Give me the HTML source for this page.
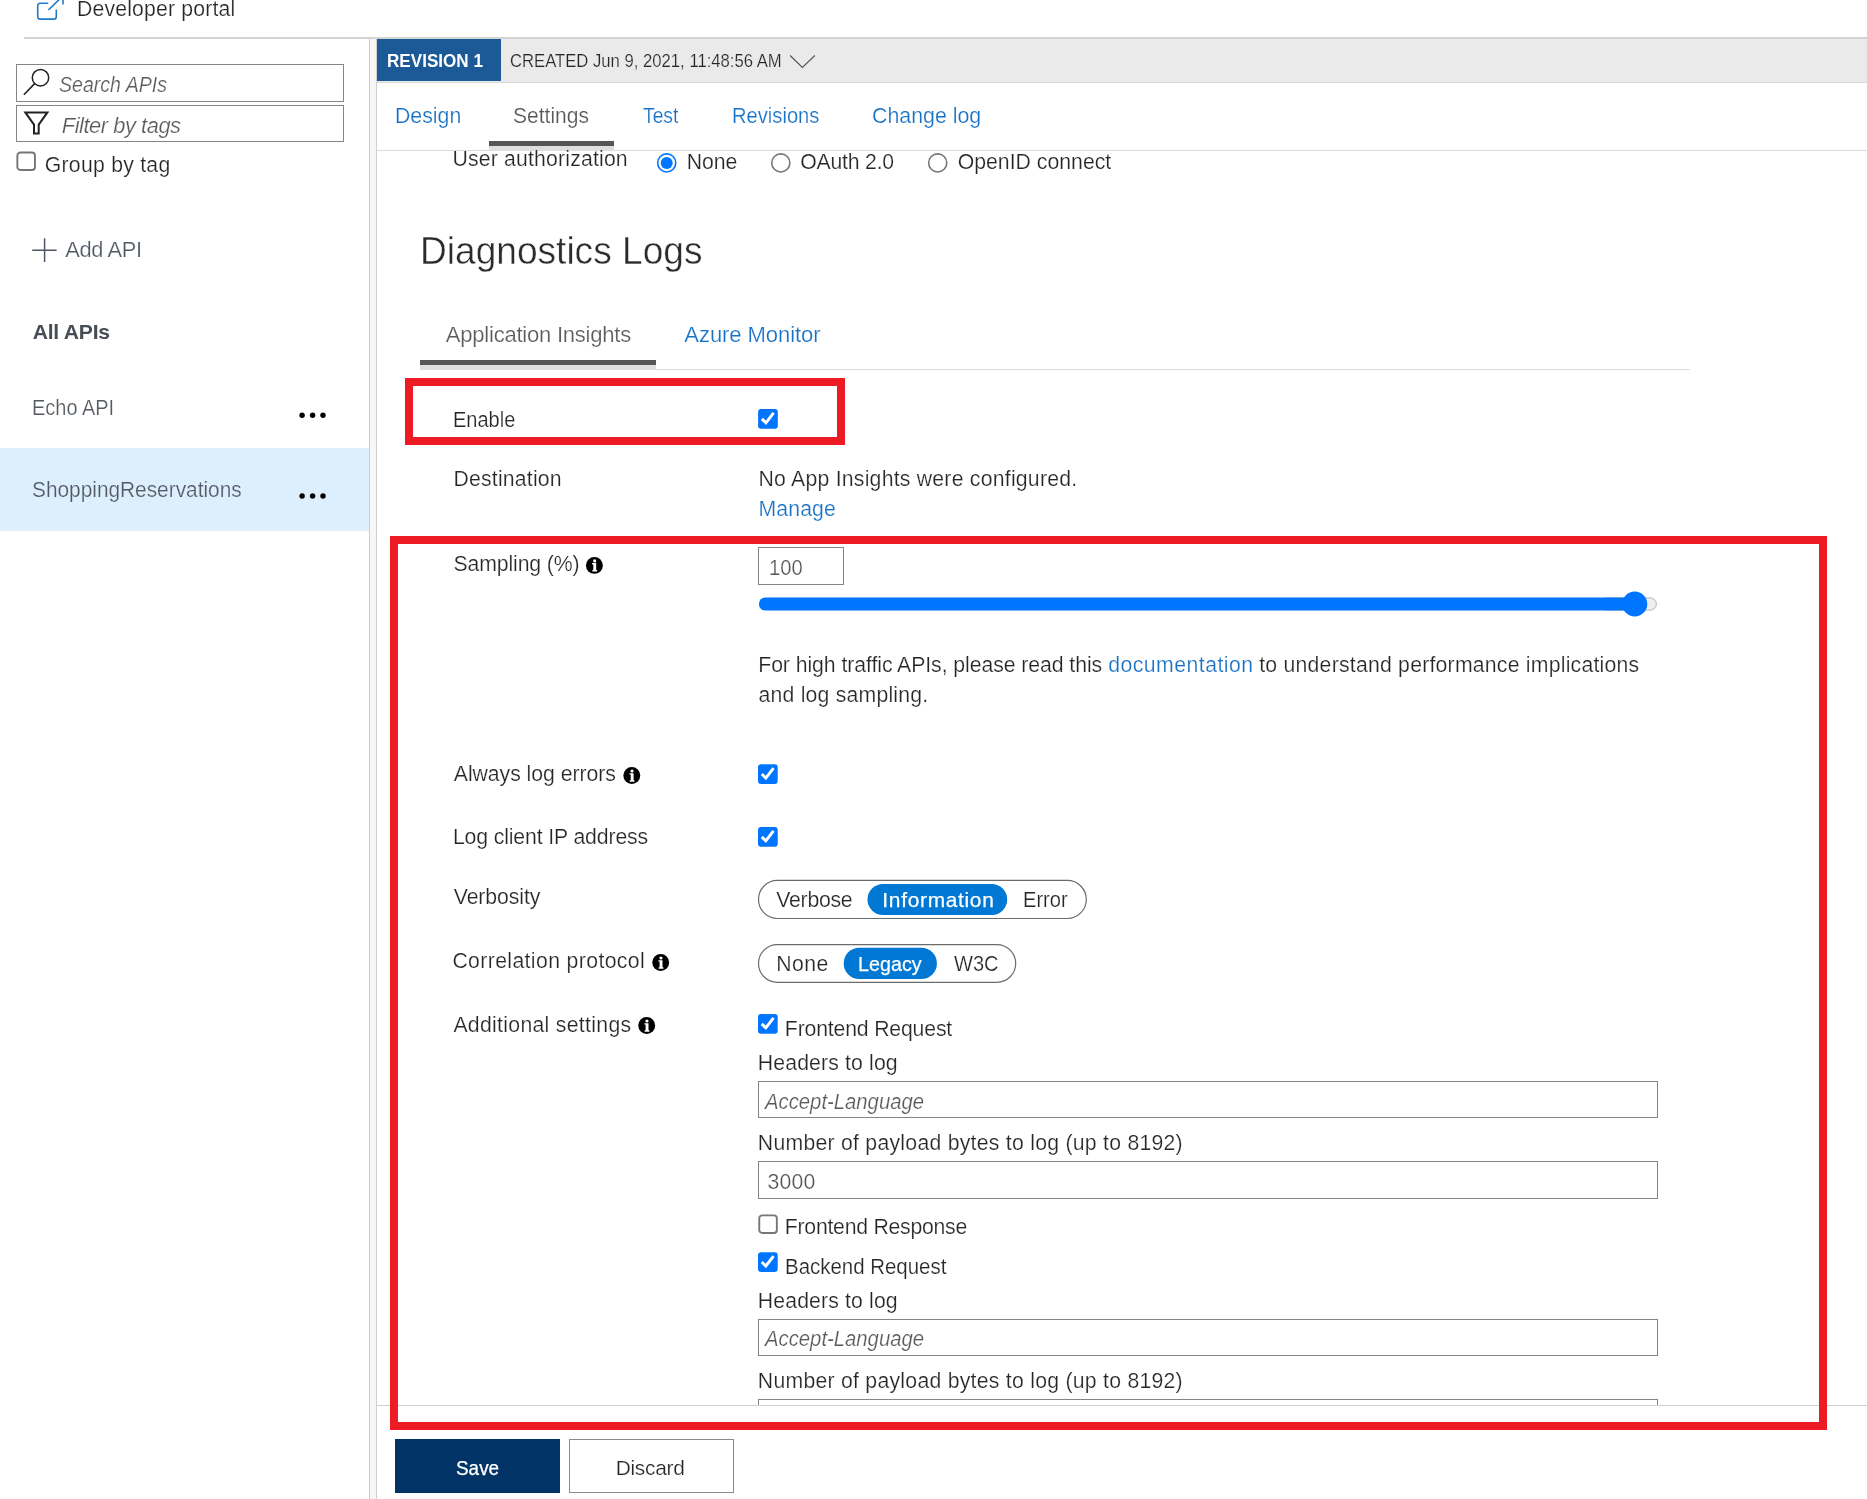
<!DOCTYPE html>
<html lang="en"><head><meta charset="utf-8"><title>API Management - Diagnostics Logs</title>
<style>
html,body{margin:0;padding:0;background:#fff;}
body{width:1867px;height:1499px;position:relative;overflow:hidden;font-family:"Liberation Sans", Arial, sans-serif;}
.t{position:absolute;white-space:pre;display:block;}
.b{position:absolute;display:block;overflow:visible;}
</style></head><body>
<div class="b" style="left:24.00px;top:37.30px;width:1843.00px;height:1.60px;background:#d4d4d4;"></div>
<svg class="b" style="left:30px;top:0px" width="40" height="24" viewBox="30 0 40 24"><path d="M48.2 3.2 H40.4 Q37.7 3.2 37.7 5.9 V16.4 Q37.7 19.1 40.4 19.1 H53.6 Q56.3 19.1 56.3 16.4 V9.4" fill="none" stroke="#2079cc" stroke-width="1.6"/><path d="M48.4 10 L63 -4.2 M63 4.4 V-5" fill="none" stroke="#2079cc" stroke-width="1.6"/></svg>
<div class="b" style="left:16.00px;top:64.00px;width:328.20px;height:37.70px;border:1px solid #858585;box-sizing:border-box;"></div>
<div class="b" style="left:16.00px;top:105.20px;width:328.20px;height:36.60px;border:1px solid #858585;box-sizing:border-box;"></div>
<svg class="b" style="left:20px;top:66px" width="34" height="32" viewBox="20 66 34 32"><circle cx="40.5" cy="77.7" r="8.2" fill="none" stroke="#222" stroke-width="1.5"/><path d="M34.6 83.6 L23.9 94.7" stroke="#222" stroke-width="1.6" fill="none"/></svg>
<svg class="b" style="left:20px;top:108px" width="34" height="30" viewBox="20 108 34 30"><path d="M25.3 112.4 H47.4 L38.7 124.6 V133.4 H34 V124.6 Z" fill="none" stroke="#222" stroke-width="2" stroke-linejoin="miter"/></svg>
<svg class="b" style="left:15px;top:150px" width="22" height="22" viewBox="-1.40 -1.50 22 22"><rect x="0.95" y="0.95" width="17.6" height="17.6" rx="3" fill="#fff" stroke="#767676" stroke-width="1.9"/></svg>
<svg class="b" style="left:30px;top:236px" width="30" height="28" viewBox="30 236 30 28"><path d="M32.2 250.3 H56.6 M44.6 238.2 V261.9" stroke="#4d5563" stroke-width="1.5" fill="none"/></svg>
<svg class="b" style="left:296px;top:410px" width="33" height="11" viewBox="-1.70 -1.30 33 11"><circle cx="4.4" cy="4" r="2.7"/><circle cx="14.9" cy="4" r="2.7"/><circle cx="25.3" cy="4" r="2.7"/></svg>
<div class="b" style="left:0.00px;top:448.00px;width:369.00px;height:82.50px;background:#ddeefd;"></div>
<svg class="b" style="left:296px;top:491px" width="33" height="10" viewBox="-1.70 -1.00 33 10"><circle cx="4.4" cy="4" r="2.7"/><circle cx="14.9" cy="4" r="2.7"/><circle cx="25.3" cy="4" r="2.7"/></svg>
<div class="b" style="left:369.00px;top:39.00px;width:8.00px;height:1460.00px;background:#f7f7f7;border-left:1px solid #cccccc;border-right:1px solid #d0d0d0;box-sizing:border-box;"></div>
<div class="b" style="left:377.00px;top:38.90px;width:1490.00px;height:43.70px;background:#eaeaea;border-bottom:1px solid #d9d9d9;box-sizing:border-box;"></div>
<div class="b" style="left:377.00px;top:39.20px;width:123.80px;height:41.60px;background:#1b5a96;"></div>
<svg class="b" style="left:786px;top:50px" width="34" height="24" viewBox="786 50 34 24"><path d="M790.1 55.5 L802.4 67.5 L814.8 55.5" fill="none" stroke="#555" stroke-width="1.15"/></svg>
<div class="b" style="left:377.00px;top:149.80px;width:1490.00px;height:1.20px;background:#dcdcdc;"></div>
<div class="b" style="left:489.00px;top:146.00px;width:124.80px;height:4.60px;background:#dedede;"></div>
<div class="b" style="left:489.00px;top:141.00px;width:124.80px;height:5.20px;background:#555;"></div>
<svg class="b" style="left:655px;top:151px" width="23" height="23" viewBox="-1.70 -1.90 23 23"><circle cx="10" cy="10" r="9.05" fill="#fff" stroke="#0075ff" stroke-width="1.6"/><circle cx="10" cy="10" r="6" fill="#0075ff"/></svg>
<svg class="b" style="left:769px;top:151px" width="23" height="23" viewBox="-1.80 -1.90 23 23"><circle cx="10" cy="10" r="9.05" fill="#fff" stroke="#767676" stroke-width="1.6"/></svg>
<svg class="b" style="left:926px;top:151px" width="23" height="23" viewBox="-1.70 -1.90 23 23"><circle cx="10" cy="10" r="9.05" fill="#fff" stroke="#767676" stroke-width="1.6"/></svg>
<div class="b" style="left:656.00px;top:369.00px;width:1034.00px;height:1.20px;background:#dcdcdc;"></div>
<div class="b" style="left:420.00px;top:365.00px;width:235.80px;height:4.90px;background:#dedede;"></div>
<div class="b" style="left:420.00px;top:359.90px;width:235.80px;height:5.20px;background:#555;"></div>
<svg class="b" style="left:757px;top:408px" width="22" height="22" viewBox="-1.10 -1.10 22 22"><g transform="scale(0.9850)"><rect x="0" y="0" width="20" height="20" rx="3" fill="#0075ff"/><path d="M3.85 9.9 L7.95 14 L15.75 3.9" fill="none" stroke="#fff" stroke-width="3" stroke-linejoin="miter"/></g></svg>
<svg class="b" style="left:584px;top:555px" width="21" height="21" viewBox="-1.40 -1.40 21 21"><circle cx="9" cy="9" r="8.45" fill="#000"/><circle cx="9.25" cy="4.5" r="1.6" fill="#fff"/><path d="M6.7 6.7 H10.8 V13.7 H11.7 V15.2 H6.95 V13.7 H7.9 V8.1 H6.7 Z" fill="#fff"/></svg>
<div class="b" style="left:757.90px;top:547.30px;width:86.30px;height:37.50px;border:1px solid #858585;box-sizing:border-box;"></div>
<svg class="b" style="left:757px;top:589px" width="902" height="30" viewBox="-1.00 -1.00 902 30"><rect x="842" y="7.9" width="56.4" height="12.2" rx="6.1" fill="#efefef" stroke="#b4b4b4" stroke-width="1"/><rect x="0.9" y="7.4" width="880" height="13.2" rx="6.6" fill="#0075ff"/><circle cx="876.7" cy="14" r="12.55" fill="#0075ff"/></svg>
<svg class="b" style="left:621px;top:765px" width="21" height="21" viewBox="-1.80 -1.50 21 21"><circle cx="9" cy="9" r="8.45" fill="#000"/><circle cx="9.25" cy="4.5" r="1.6" fill="#fff"/><path d="M6.7 6.7 H10.8 V13.7 H11.7 V15.2 H6.95 V13.7 H7.9 V8.1 H6.7 Z" fill="#fff"/></svg>
<svg class="b" style="left:757px;top:763px" width="22" height="22" viewBox="-1.00 -1.30 22 22"><g transform="scale(0.9850)"><rect x="0" y="0" width="20" height="20" rx="3" fill="#0075ff"/><path d="M3.85 9.9 L7.95 14 L15.75 3.9" fill="none" stroke="#fff" stroke-width="3" stroke-linejoin="miter"/></g></svg>
<svg class="b" style="left:757px;top:826px" width="22" height="22" viewBox="-1.00 -1.10 22 22"><g transform="scale(0.9850)"><rect x="0" y="0" width="20" height="20" rx="3" fill="#0075ff"/><path d="M3.85 9.9 L7.95 14 L15.75 3.9" fill="none" stroke="#fff" stroke-width="3" stroke-linejoin="miter"/></g></svg>
<svg class="b" style="left:756px;top:878px" width="332" height="43" viewBox="-1.90 -1.80 332 43"><rect x="0.6" y="0.6" width="327.8" height="38.1" rx="19.05" fill="#fff" stroke="#6b6b6b" stroke-width="1.2"/><rect x="109.6" y="4.2" width="139.7" height="31" rx="15.5" fill="#0078d4"/></svg>
<svg class="b" style="left:650px;top:952px" width="21" height="21" viewBox="-1.70 -1.50 21 21"><circle cx="9" cy="9" r="8.45" fill="#000"/><circle cx="9.25" cy="4.5" r="1.6" fill="#fff"/><path d="M6.7 6.7 H10.8 V13.7 H11.7 V15.2 H6.95 V13.7 H7.9 V8.1 H6.7 Z" fill="#fff"/></svg>
<svg class="b" style="left:756px;top:943px" width="262" height="41" viewBox="-1.90 -1.00 262 41"><rect x="0.6" y="0.6" width="257.2" height="37.7" rx="18.85" fill="#fff" stroke="#6b6b6b" stroke-width="1.2"/><rect x="85.8" y="3.8" width="93.2" height="31.3" rx="15.6" fill="#0078d4"/></svg>
<svg class="b" style="left:636px;top:1015px" width="21" height="21" viewBox="-1.70 -1.50 21 21"><circle cx="9" cy="9" r="8.45" fill="#000"/><circle cx="9.25" cy="4.5" r="1.6" fill="#fff"/><path d="M6.7 6.7 H10.8 V13.7 H11.7 V15.2 H6.95 V13.7 H7.9 V8.1 H6.7 Z" fill="#fff"/></svg>
<svg class="b" style="left:757px;top:1013px" width="22" height="22" viewBox="-1.00 -1.10 22 22"><g transform="scale(0.9850)"><rect x="0" y="0" width="20" height="20" rx="3" fill="#0075ff"/><path d="M3.85 9.9 L7.95 14 L15.75 3.9" fill="none" stroke="#fff" stroke-width="3" stroke-linejoin="miter"/></g></svg>
<div class="b" style="left:758.00px;top:1081.30px;width:899.90px;height:36.50px;border:1px solid #858585;box-sizing:border-box;"></div>
<div class="b" style="left:758.00px;top:1161.20px;width:899.90px;height:37.50px;border:1px solid #858585;box-sizing:border-box;"></div>
<svg class="b" style="left:757px;top:1213px" width="22" height="22" viewBox="-1.30 -1.40 22 22"><rect x="0.95" y="0.95" width="17.6" height="17.6" rx="3" fill="#fff" stroke="#767676" stroke-width="1.9"/></svg>
<svg class="b" style="left:757px;top:1251px" width="22" height="22" viewBox="-1.00 -1.20 22 22"><g transform="scale(0.9850)"><rect x="0" y="0" width="20" height="20" rx="3" fill="#0075ff"/><path d="M3.85 9.9 L7.95 14 L15.75 3.9" fill="none" stroke="#fff" stroke-width="3" stroke-linejoin="miter"/></g></svg>
<div class="b" style="left:758.00px;top:1319.00px;width:899.90px;height:37.00px;border:1px solid #858585;box-sizing:border-box;"></div>
<div class="b" style="left:758.00px;top:1399.20px;width:899.90px;height:5.80px;border:1px solid #858585;border-bottom:none;box-sizing:border-box;"></div>
<div class="b" style="left:377.00px;top:1404.60px;width:1490.00px;height:94.40px;background:#fff;"></div>
<div class="b" style="left:377.00px;top:1404.60px;width:1490.00px;height:1.20px;background:#cfcfcf;"></div>
<div class="b" style="left:394.90px;top:1438.70px;width:165.10px;height:54.10px;background:#013366;"></div>
<div class="b" style="left:569.00px;top:1438.70px;width:165.20px;height:54.10px;border:1px solid #8a8a8a;box-sizing:border-box;background:#fff;"></div>
<div class="b" style="left:0;top:0;width:1867px;height:1499px;will-change:transform;">
<span class="t" id="t0" style="left:77.00px;top:-2.46px;font-size:21.22px;line-height:21.22px;color:#262626;letter-spacing:0.169px;-webkit-text-stroke:0.22px #fff;">Developer portal</span>
<span class="t" id="t1" style="left:58.70px;top:73.61px;font-size:21.84px;line-height:21.84px;color:#5a5a5a;letter-spacing:0.000px;font-style:italic;-webkit-text-stroke:0.22px #fff;transform:scaleX(0.8955);transform-origin:0 50%;">Search APIs</span>
<span class="t" id="t2" style="left:61.76px;top:115.01px;font-size:21.84px;line-height:21.84px;color:#5a5a5a;letter-spacing:-0.438px;font-style:italic;-webkit-text-stroke:0.22px #fff;">Filter by tags</span>
<span class="t" id="t3" style="left:44.78px;top:153.54px;font-size:21.22px;line-height:21.22px;color:#262626;letter-spacing:0.252px;-webkit-text-stroke:0.22px #fff;">Group by tag</span>
<span class="t" id="t4" style="left:65.28px;top:238.71px;font-size:21.84px;line-height:21.84px;color:#505963;letter-spacing:-0.363px;-webkit-text-stroke:0.22px #fff;">Add API</span>
<span class="t" id="t5" style="left:32.70px;top:321.43px;font-size:21.11px;line-height:21.11px;color:#474c55;letter-spacing:-0.228px;font-weight:bold;-webkit-text-stroke:0px #fff;">All APIs</span>
<span class="t" id="t6" style="left:32.18px;top:396.71px;font-size:21.84px;line-height:21.84px;color:#555a60;letter-spacing:0.000px;-webkit-text-stroke:0.22px #fff;transform:scaleX(0.9143);transform-origin:0 50%;">Echo API</span>
<span class="t" id="t7" style="left:31.60px;top:478.71px;font-size:21.84px;line-height:21.84px;color:#535a64;letter-spacing:0.000px;-webkit-text-stroke:0.22px #ddeefd;transform:scaleX(0.9546);transform-origin:0 50%;">ShoppingReservations</span>
<span class="t" id="t8" style="left:386.80px;top:52.15px;font-size:18.72px;line-height:18.72px;color:#fff;letter-spacing:0.000px;font-weight:bold;-webkit-text-stroke:0px #fff;transform:scaleX(0.9135);transform-origin:0 50%;">REVISION 1</span>
<span class="t" id="t9" style="left:509.66px;top:52.24px;font-size:18.62px;line-height:18.62px;color:#262626;letter-spacing:0.000px;-webkit-text-stroke:0.22px #eaeaea;transform:scaleX(0.8955);transform-origin:0 50%;">CREATED Jun 9, 2021, 11:48:56 AM</span>
<span class="t" id="t10" style="left:395.16px;top:105.47px;font-size:22.36px;line-height:22.36px;color:#1771c6;letter-spacing:0.000px;-webkit-text-stroke:0.22px #fff;transform:scaleX(0.9520);transform-origin:0 50%;">Design</span>
<span class="t" id="t11" style="left:512.90px;top:105.47px;font-size:22.36px;line-height:22.36px;color:#555;letter-spacing:0.000px;-webkit-text-stroke:0.22px #fff;transform:scaleX(0.9402);transform-origin:0 50%;">Settings</span>
<span class="t" id="t12" style="left:643.16px;top:105.47px;font-size:22.36px;line-height:22.36px;color:#1771c6;letter-spacing:0.000px;-webkit-text-stroke:0.22px #fff;transform:scaleX(0.8623);transform-origin:0 50%;">Test</span>
<span class="t" id="t13" style="left:731.70px;top:105.47px;font-size:22.36px;line-height:22.36px;color:#1771c6;letter-spacing:0.000px;-webkit-text-stroke:0.22px #fff;transform:scaleX(0.9016);transform-origin:0 50%;">Revisions</span>
<span class="t" id="t14" style="left:871.96px;top:105.47px;font-size:22.36px;line-height:22.36px;color:#1771c6;letter-spacing:0.000px;-webkit-text-stroke:0.22px #fff;transform:scaleX(0.9549);transform-origin:0 50%;">Change log</span>
<span class="t" id="t15" style="left:452.56px;top:148.04px;font-size:21.22px;line-height:21.22px;color:#262626;letter-spacing:0.172px;-webkit-text-stroke:0.22px #fff;">User authorization</span>
<span class="t" id="t16" style="left:686.72px;top:151.34px;font-size:21.22px;line-height:21.22px;color:#262626;letter-spacing:-0.068px;-webkit-text-stroke:0.22px #fff;">None</span>
<span class="t" id="t17" style="left:800.16px;top:151.34px;font-size:21.22px;line-height:21.22px;color:#262626;letter-spacing:-0.191px;-webkit-text-stroke:0.22px #fff;">OAuth 2.0</span>
<span class="t" id="t18" style="left:957.70px;top:151.34px;font-size:21.22px;line-height:21.22px;color:#262626;letter-spacing:0.017px;-webkit-text-stroke:0.22px #fff;">OpenID connect</span>
<span class="t" id="t19" style="left:419.86px;top:230.73px;font-size:39.30px;line-height:39.30px;color:#2b2b2b;letter-spacing:0.000px;-webkit-text-stroke:0.45px #fff;transform:scaleX(0.9438);transform-origin:0 50%;">Diagnostics Logs</span>
<span class="t" id="t20" style="left:445.82px;top:323.73px;font-size:22.05px;line-height:22.05px;color:#5a5a5a;letter-spacing:-0.241px;-webkit-text-stroke:0.22px #fff;">Application Insights</span>
<span class="t" id="t21" style="left:684.34px;top:323.73px;font-size:22.05px;line-height:22.05px;color:#1771c6;letter-spacing:-0.079px;-webkit-text-stroke:0.22px #fff;">Azure Monitor</span>
<span class="t" id="t22" style="left:452.92px;top:409.04px;font-size:21.22px;line-height:21.22px;color:#262626;letter-spacing:0.000px;-webkit-text-stroke:0.22px #fff;transform:scaleX(0.9435);transform-origin:0 50%;">Enable</span>
<span class="t" id="t23" style="left:453.52px;top:468.14px;font-size:21.22px;line-height:21.22px;color:#262626;letter-spacing:0.199px;-webkit-text-stroke:0.22px #fff;">Destination</span>
<span class="t" id="t24" style="left:758.52px;top:468.34px;font-size:21.22px;line-height:21.22px;color:#262626;letter-spacing:0.234px;-webkit-text-stroke:0.22px #fff;">No App Insights were configured.</span>
<span class="t" id="t25" style="left:758.52px;top:498.34px;font-size:21.22px;line-height:21.22px;color:#1771c6;letter-spacing:0.128px;-webkit-text-stroke:0.22px #fff;">Manage</span>
<span class="t" id="t26" style="left:453.54px;top:552.94px;font-size:21.22px;line-height:21.22px;color:#262626;letter-spacing:-0.122px;-webkit-text-stroke:0.22px #fff;">Sampling (%)</span>
<span class="t" id="t27" style="left:769.10px;top:557.04px;font-size:21.22px;line-height:21.22px;color:#555;letter-spacing:0.000px;-webkit-text-stroke:0.22px #fff;transform:scaleX(0.9516);transform-origin:0 50%;">100</span>
<span class="t" id="t28" style="left:758.24px;top:654.24px;font-size:21.22px;line-height:21.22px;color:#262626;letter-spacing:-0.064px;-webkit-text-stroke:0.22px #fff;">For high traffic APIs, please read this</span>
<span class="t" id="t29" style="left:1108.26px;top:654.24px;font-size:21.22px;line-height:21.22px;color:#1771c6;letter-spacing:0.464px;-webkit-text-stroke:0.22px #fff;">documentation</span>
<span class="t" id="t30" style="left:1259.26px;top:654.24px;font-size:21.22px;line-height:21.22px;color:#262626;letter-spacing:0.228px;-webkit-text-stroke:0.22px #fff;">to understand performance implications</span>
<span class="t" id="t31" style="left:758.54px;top:684.14px;font-size:21.22px;line-height:21.22px;color:#262626;letter-spacing:0.209px;-webkit-text-stroke:0.22px #fff;">and log sampling.</span>
<span class="t" id="t32" style="left:453.78px;top:763.14px;font-size:21.22px;line-height:21.22px;color:#262626;letter-spacing:-0.037px;-webkit-text-stroke:0.22px #fff;">Always log errors</span>
<span class="t" id="t33" style="left:452.90px;top:826.34px;font-size:21.22px;line-height:21.22px;color:#262626;letter-spacing:-0.126px;-webkit-text-stroke:0.22px #fff;">Log client IP address</span>
<span class="t" id="t34" style="left:453.78px;top:886.34px;font-size:21.22px;line-height:21.22px;color:#262626;letter-spacing:-0.093px;-webkit-text-stroke:0.22px #fff;">Verbosity</span>
<span class="t" id="t35" style="left:776.34px;top:889.04px;font-size:21.22px;line-height:21.22px;color:#262626;letter-spacing:-0.267px;-webkit-text-stroke:0.22px #fff;">Verbose</span>
<span class="t" id="t36" style="left:882.36px;top:890.31px;font-size:20.90px;line-height:20.90px;color:#fff;letter-spacing:0.694px;-webkit-text-stroke:0.25px #fff;">Information</span>
<span class="t" id="t37" style="left:1023.30px;top:889.04px;font-size:21.22px;line-height:21.22px;color:#262626;letter-spacing:0.000px;-webkit-text-stroke:0.22px #fff;transform:scaleX(0.9469);transform-origin:0 50%;">Error</span>
<span class="t" id="t38" style="left:452.42px;top:950.34px;font-size:21.22px;line-height:21.22px;color:#262626;letter-spacing:0.375px;-webkit-text-stroke:0.22px #fff;">Correlation protocol</span>
<span class="t" id="t39" style="left:776.24px;top:953.24px;font-size:21.22px;line-height:21.22px;color:#262626;letter-spacing:0.412px;-webkit-text-stroke:0.22px #fff;">None</span>
<span class="t" id="t40" style="left:857.90px;top:953.51px;font-size:20.90px;line-height:20.90px;color:#fff;letter-spacing:0.000px;-webkit-text-stroke:0.25px #fff;transform:scaleX(0.9444);transform-origin:0 50%;">Legacy</span>
<span class="t" id="t41" style="left:954.48px;top:953.24px;font-size:21.22px;line-height:21.22px;color:#262626;letter-spacing:0.000px;-webkit-text-stroke:0.22px #fff;transform:scaleX(0.9436);transform-origin:0 50%;">W3C</span>
<span class="t" id="t42" style="left:453.42px;top:1014.04px;font-size:21.22px;line-height:21.22px;color:#262626;letter-spacing:0.304px;-webkit-text-stroke:0.22px #fff;">Additional settings</span>
<span class="t" id="t43" style="left:784.84px;top:1018.14px;font-size:21.22px;line-height:21.22px;color:#262626;letter-spacing:-0.164px;-webkit-text-stroke:0.22px #fff;">Frontend Request</span>
<span class="t" id="t44" style="left:757.84px;top:1051.94px;font-size:21.22px;line-height:21.22px;color:#262626;letter-spacing:0.140px;-webkit-text-stroke:0.22px #fff;">Headers to log</span>
<span class="t" id="t45" style="left:764.68px;top:1090.61px;font-size:21.84px;line-height:21.84px;color:#5a5a5a;letter-spacing:0.000px;font-style:italic;-webkit-text-stroke:0.22px #fff;transform:scaleX(0.9293);transform-origin:0 50%;">Accept-Language</span>
<span class="t" id="t46" style="left:757.84px;top:1131.54px;font-size:21.22px;line-height:21.22px;color:#262626;letter-spacing:0.258px;-webkit-text-stroke:0.22px #fff;">Number of payload bytes to log (up to 8192)</span>
<span class="t" id="t47" style="left:767.54px;top:1170.84px;font-size:21.22px;line-height:21.22px;color:#555;letter-spacing:0.151px;-webkit-text-stroke:0.22px #fff;">3000</span>
<span class="t" id="t48" style="left:784.84px;top:1216.34px;font-size:21.22px;line-height:21.22px;color:#262626;letter-spacing:-0.248px;-webkit-text-stroke:0.22px #fff;">Frontend Response</span>
<span class="t" id="t49" style="left:784.84px;top:1255.94px;font-size:21.22px;line-height:21.22px;color:#262626;letter-spacing:0.000px;-webkit-text-stroke:0.22px #fff;transform:scaleX(0.9634);transform-origin:0 50%;">Backend Request</span>
<span class="t" id="t50" style="left:757.84px;top:1289.94px;font-size:21.22px;line-height:21.22px;color:#262626;letter-spacing:0.140px;-webkit-text-stroke:0.22px #fff;">Headers to log</span>
<span class="t" id="t51" style="left:764.68px;top:1328.41px;font-size:21.84px;line-height:21.84px;color:#5a5a5a;letter-spacing:0.000px;font-style:italic;-webkit-text-stroke:0.22px #fff;transform:scaleX(0.9293);transform-origin:0 50%;">Accept-Language</span>
<span class="t" id="t52" style="left:757.84px;top:1370.34px;font-size:21.22px;line-height:21.22px;color:#262626;letter-spacing:0.258px;-webkit-text-stroke:0.22px #fff;">Number of payload bytes to log (up to 8192)</span>
<span class="t" id="t53" style="left:456.32px;top:1457.56px;font-size:20.49px;line-height:20.49px;color:#fff;letter-spacing:0.000px;-webkit-text-stroke:0.25px #fff;transform:scaleX(0.9232);transform-origin:0 50%;">Save</span>
<span class="t" id="t54" style="left:615.70px;top:1458.21px;font-size:20.90px;line-height:20.90px;color:#262626;letter-spacing:-0.290px;-webkit-text-stroke:0.22px #fff;">Discard</span>
</div>
<div class="b" style="left:405.00px;top:378.00px;width:440.00px;height:67.00px;border:8px solid #ed1c24;box-sizing:border-box;"></div>
<div class="b" style="left:390.00px;top:536.00px;width:1437.00px;height:894.00px;border:8px solid #ed1c24;box-sizing:border-box;"></div>
</body></html>
